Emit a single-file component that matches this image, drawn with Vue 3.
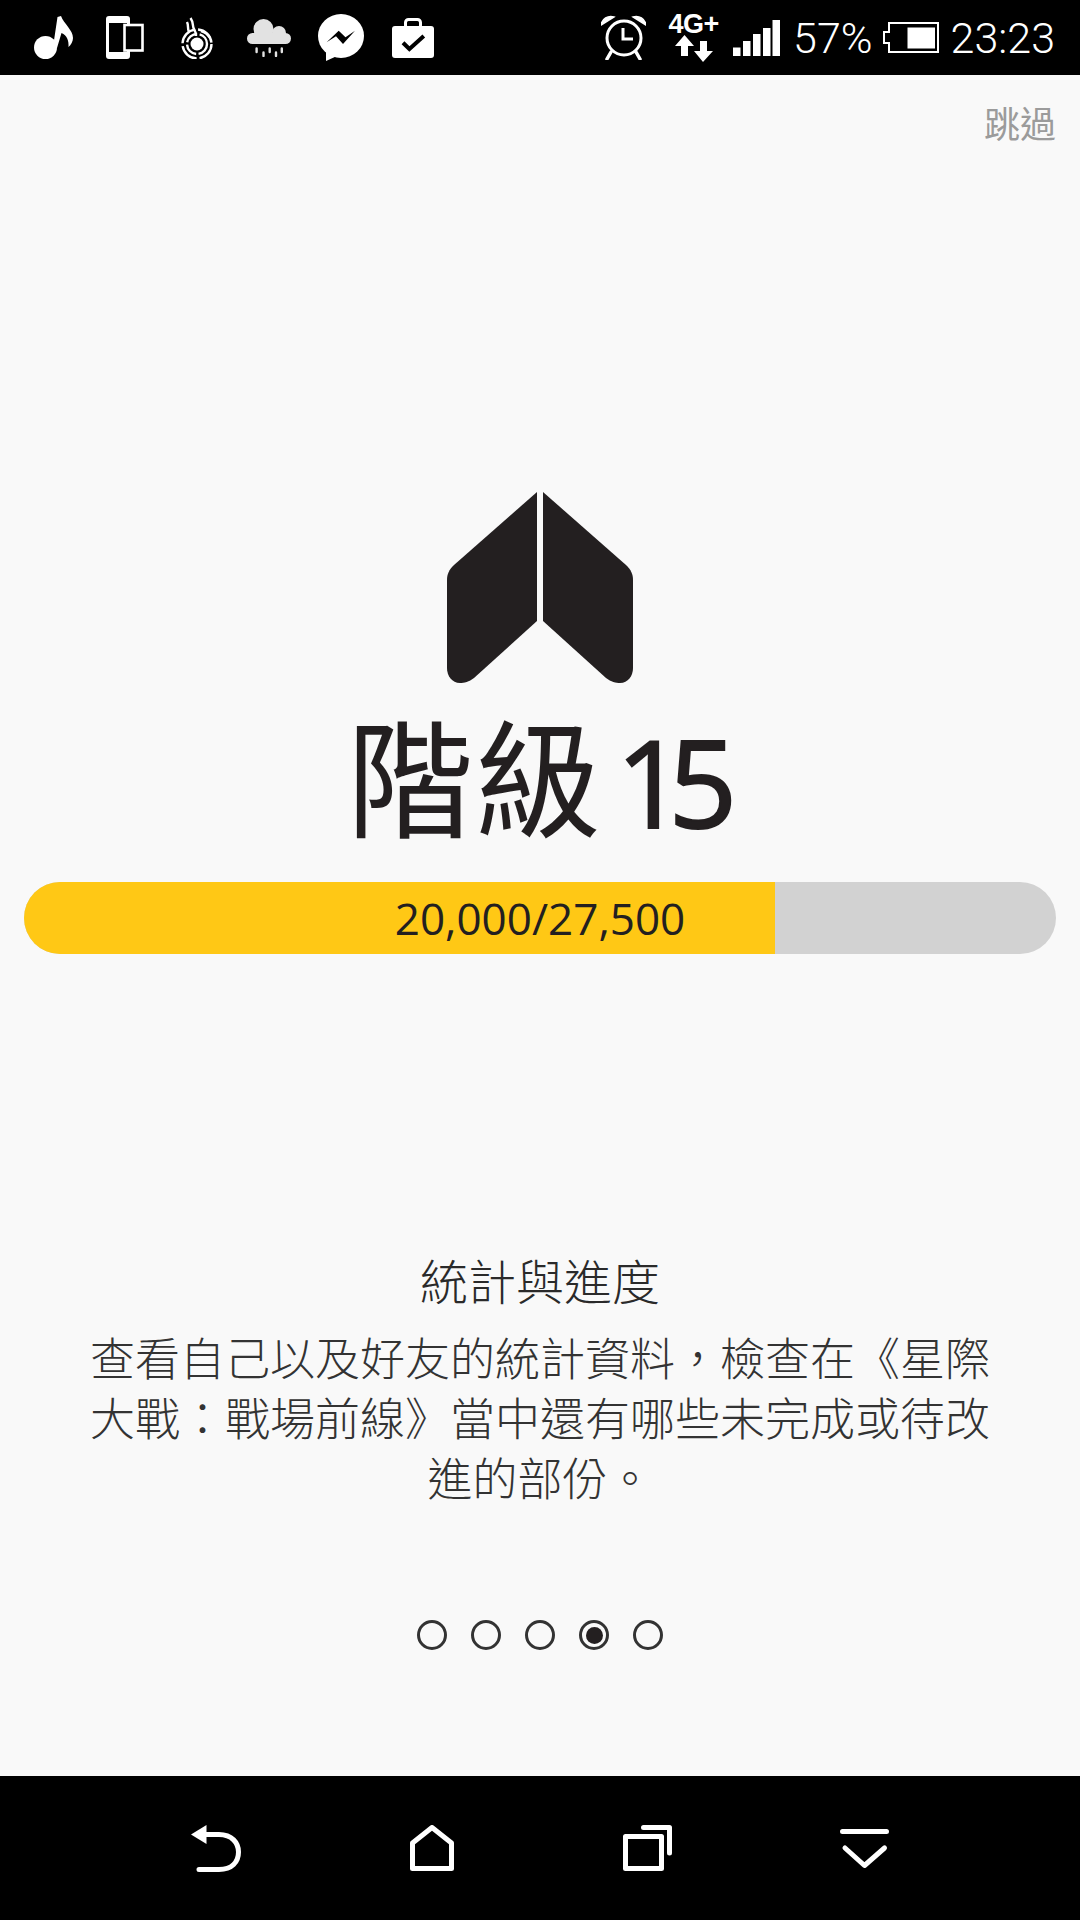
<template>
  <div class="screen" lang="zh-TW">
    <header class="status-bar">
      <div class="status-left">
        <span class="slot">
          <svg width="39" height="43" viewBox="0 0 39 43">
            <circle cx="11.5" cy="31.5" r="11.5" fill="#fff" />
            <path d="M19 31 L23.5 1 L27 0 C30 8 39 14 39 22 C39 25 37 29 34.5 31 C35 25 33 19 27.5 17 L23 32 Z" fill="#fff" />
          </svg>
        </span>
        <span class="slot">
          <svg width="38" height="43" viewBox="0 0 38 43">
            <rect width="24" height="43" rx="3" fill="#fff" />
            <rect x="3" y="7" width="18" height="29" fill="#000" />
            <rect x="18.5" y="9" width="18" height="25.5" fill="#000" stroke="#fff" stroke-width="2.6" />
          </svg>
        </span>
        <span class="slot">
          <svg width="32" height="42" viewBox="0 0 32 42">
            <g fill="none" stroke="#fff" stroke-width="2.4">
              <path d="M9.5 1 C13 6 11 9 13 12 C14 14 15 15 15 19" />
              <path d="M6 5 C8 9 6 11 8 15" />
              <path d="M20 14 A14.5 14.5 0 0 1 29 21" />
              <circle cx="16" cy="27" r="10" stroke-dasharray="14 2.5" />
              <circle cx="16" cy="27" r="14.5" stroke-dasharray="20 3" />
            </g>
            <circle cx="16" cy="27" r="6.5" fill="#fff" />
          </svg>
        </span>
        <span class="slot">
          <svg width="44" height="38" viewBox="0 0 44 38">
            <g fill="#e2e2e2">
              <circle cx="16.5" cy="10" r="10" />
              <circle cx="32" cy="14" r="7" />
              <rect y="14" width="44" height="11" rx="5.5" />
            </g>
            <g stroke="#e2e2e2" stroke-width="2.4" stroke-linecap="round">
              <path d="M9.6 29.5 V33 M22.7 29.5 V33 M34.8 29.5 V33 M16.5 33.5 V37 M29 33.5 V37" />
            </g>
          </svg>
        </span>
        <span class="slot">
          <svg width="46" height="47" viewBox="0 0 46 47">
            <ellipse cx="23" cy="22" rx="23" ry="22" fill="#fff" />
            <path d="M8 36 L8 47 L19 42 Z" fill="#fff" />
            <path d="M8.6 28.3 L20.7 16.7 L27.5 23.3 L37 16.7 L25 30 L18 22.3 Z" fill="#000" />
          </svg>
        </span>
        <span class="slot">
          <svg width="42" height="40" viewBox="0 0 42 40">
            <rect y="8" width="42" height="32" rx="3" fill="#fff" />
            <rect x="13.5" y="1.5" width="15" height="9" rx="3" fill="none" stroke="#fff" stroke-width="3" />
            <path d="M11 24.7 L17.4 31 L31.8 18" fill="none" stroke="#000" stroke-width="4" />
          </svg>
        </span>
      </div>
      <div class="status-right">
        <svg class="alarm" width="45" height="45" viewBox="0 0 45 45">
          <circle cx="23" cy="23" r="17" fill="none" stroke="#fff" stroke-width="3" />
          <path d="M22 13 V24 H32" fill="none" stroke="#fff" stroke-width="3" />
          <path d="M0 10 C1 4 7 0 13 2 Z M45 10 C44 4 38 0 32 2 Z" fill="#fff" stroke="#fff" stroke-width="1.5" />
          <path d="M10 37 L6 44 M35 37 L39 44" stroke="#fff" stroke-width="3.5" stroke-linecap="round" />
        </svg>
        <div class="network">
          <span class="network-label">4G+</span>
          <svg width="38" height="27" viewBox="0 0 38 27">
            <path d="M9.5 0 L19 11 H13 V21 H6 V11 H0 Z M28 27 L19 16 H25 V6 H32 V16 H38 Z" fill="#fff" />
          </svg>
        </div>
        <svg class="signal" width="47" height="36" viewBox="0 0 47 36">
          <rect y="27.5" width="7.5" height="8.5" fill="#fff" />
          <rect x="10" y="21" width="7.5" height="15" fill="#fff" />
          <rect x="20" y="14" width="7.5" height="22" fill="#fff" />
          <rect x="30" y="8" width="7.5" height="28" fill="#fff" />
          <rect x="39.5" width="7.5" height="36" fill="#fff" />
        </svg>
        <span class="percent">57%</span>
        <svg class="battery" width="56" height="31" viewBox="0 0 56 31">
          <path d="M6 1 H55 V30 H6 V21 H1 V10 H6 Z" fill="none" stroke="#fff" stroke-width="2" />
          <rect x="24.5" y="5.5" width="27.5" height="21" fill="#fff" />
        </svg>
        <span class="clock">23:23</span>
      </div>
    </header>

    <main class="page">
      <div class="skip-row"><span class="skip">跳過</span></div>

      <svg class="rank-icon" width="186" height="191" viewBox="0 0 186 191">
        <path d="M90 0 V129 L27 186 C22 190 17 191 13 191 C5 191 0 184 0 176 V88 C0 82 2 78 7 73 Z" fill="#231f20" />
        <path d="M96 0 V129 L159 186 C164 190 169 191 173 191 C181 191 186 184 186 176 V88 C186 82 184 78 179 73 Z" fill="#231f20" />
      </svg>
      <h1 class="rank-title"><span>階級</span><span class="rank-number">15</span></h1>

      <div class="progress">
        <div class="progress-fill" :style="{ width: percent + '%' }"></div>
        <span class="progress-label">{{ label }}</span>
      </div>

      <section class="intro">
        <h2>統計與進度</h2>
        <p>查看自己以及好友的統計資料，檢查在《星際大戰：戰場前線》當中還有哪些未完成或待改進的部份。</p>
      </section>

      <div class="dots">
        <span v-for="n in 5" :key="n" class="dot" :class="{ active: n === 4 }"></span>
      </div>
    </main>

    <footer class="nav-bar">
      <span class="nav-slot">
        <svg width="50" height="47" viewBox="0 0 50 47">
          <path d="M0 9.5 L15.5 0 V19 Z" fill="#fff" />
          <path d="M13 9.5 H28 C41 9.5 47.5 18 47.5 27 C47.5 37 41 44.5 28 44.5 H8" fill="none" stroke="#fff" stroke-width="5" stroke-linecap="round" />
        </svg>
      </span>
      <span class="nav-slot">
        <svg width="44" height="46" viewBox="0 0 44 46">
          <path d="M2.5 43.5 V18 L22 2.5 L41.5 18 V43.5 Z" fill="none" stroke="#fff" stroke-width="5" stroke-linejoin="round" />
        </svg>
      </span>
      <span class="nav-slot">
        <svg width="50" height="46" viewBox="0 0 50 46">
          <rect x="2.5" y="11.5" width="36" height="32" fill="none" stroke="#fff" stroke-width="5" stroke-linejoin="round" />
          <path d="M20.5 2.5 H46.5 V28" fill="none" stroke="#fff" stroke-width="5" stroke-linecap="round" stroke-linejoin="round" />
        </svg>
      </span>
      <span class="nav-slot">
        <svg width="49" height="42" viewBox="0 0 49 42">
          <path d="M2.5 4.5 H46.5 M5 21 L24.5 38.5 L44.5 21" fill="none" stroke="#fff" stroke-width="5" stroke-linecap="round" stroke-linejoin="round" />
        </svg>
      </span>
    </footer>
  </div>
</template>

<script setup>
import { computed } from 'vue'

const current = 20000
const total = 27500

const percent = computed(() => (current / total) * 100)
const label = computed(() => `${current.toLocaleString('en-US')}/${total.toLocaleString('en-US')}`)
</script>

<style scoped>
.screen {
  width: 1080px;
  height: 1920px;
  display: flex;
  flex-direction: column;
  background: #f9f9f9;
  overflow: hidden;
  font-family: "Open Sans", "Noto Sans CJK TC", sans-serif;
  color: #231f20;
}

.status-bar {
  height: 75px;
  flex: none;
  background: #000;
  display: flex;
  align-items: center;
  justify-content: space-between;
  color: #fff;
}

.status-left {
  display: flex;
  padding-left: 17px;
}

.slot {
  width: 72px;
  display: flex;
  justify-content: center;
  align-items: center;
}

.status-right {
  display: flex;
  align-items: center;
  padding-right: 25px;
  font-family: Roboto, sans-serif;
  font-size: 43px;
  font-weight: 300;
}

.network {
  margin-left: 22px;
  width: 51px;
  display: flex;
  flex-direction: column;
  align-items: center;
}

.network-label {
  font-family: "Liberation Sans", sans-serif;
  font-size: 27px;
  line-height: 22px;
  font-weight: 700;
  letter-spacing: -0.5px;
  white-space: nowrap;
}

.signal {
  margin-left: 14px;
}

.percent {
  margin-left: 13px;
}

.battery {
  margin-left: 10px;
}

.clock {
  margin-left: 12px;
}

.page {
  flex: 1;
  display: flex;
  flex-direction: column;
  align-items: center;
}

.skip-row {
  align-self: stretch;
  display: flex;
  justify-content: flex-end;
  padding: 26px 24px 0 0;
}

.skip {
  font-size: 36px;
  line-height: 48px;
  color: #9b9b9b;
}

.rank-icon {
  margin-top: 343px;
}

.rank-title {
  margin: 16px 0 0;
  display: flex;
  align-items: baseline;
  gap: 15px;
  font-size: 127px;
  line-height: 160px;
  font-weight: 400;
  white-space: nowrap;
}

.rank-number {
  font-size: 120px;
  font-weight: 400;
  -webkit-text-stroke: 2px #231f20;
  letter-spacing: -16px;
  padding-right: 12px;
}

.progress {
  position: relative;
  width: 1032px;
  height: 72px;
  margin-top: 20px;
  border-radius: 36px;
  background: #d2d2d2;
  overflow: hidden;
  display: flex;
  align-items: center;
  justify-content: center;
}

.progress-fill {
  position: absolute;
  left: 0;
  top: 0;
  bottom: 0;
  background: #ffc815;
}

.progress-label {
  position: relative;
  font-size: 44px;
}

.intro {
  width: 900px;
  margin-top: 298px;
  text-align: center;
  color: #333;
}

.intro h2 {
  margin: 0;
  font-size: 48px;
  line-height: 60px;
  font-weight: 300;
  color: #2a2a2a;
}

.intro p {
  margin: 17px 0 0;
  font-size: 45px;
  line-height: 60px;
  font-weight: 300;
}

.dots {
  display: flex;
  gap: 24px;
  margin-top: 111px;
}

.dot {
  width: 30px;
  height: 30px;
  box-sizing: border-box;
  border: 3.5px solid #333;
  border-radius: 50%;
  display: flex;
  align-items: center;
  justify-content: center;
}

.dot.active::after {
  content: "";
  width: 17px;
  height: 17px;
  border-radius: 50%;
  background: #231f20;
}

.nav-bar {
  height: 144px;
  flex: none;
  box-sizing: border-box;
  padding: 0 108px;
  background: #000;
  display: flex;
}

.nav-slot {
  flex: 1;
  display: flex;
  align-items: center;
  justify-content: center;
}
</style>
